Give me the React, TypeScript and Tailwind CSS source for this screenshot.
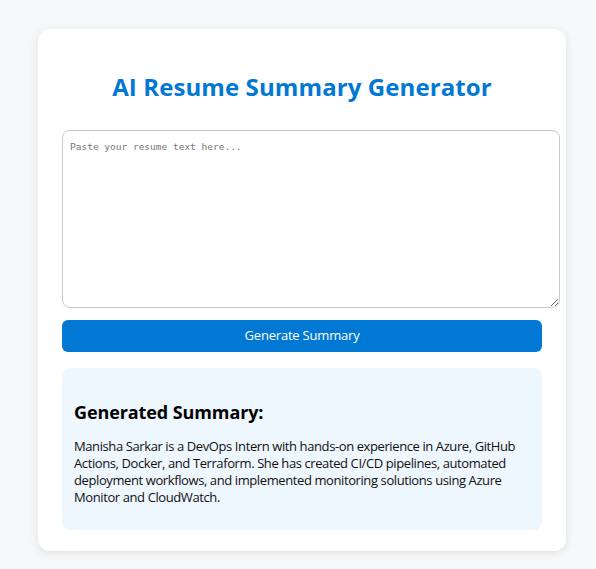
export default function App() {
  return (
    <div className="min-h-[569px] bg-[#f6f8fa] pl-[38px] pt-[29px] pb-[18px] font-['Open_Sans',sans-serif]">
      <div className="w-[528px] rounded-xl bg-white px-6 pb-[21px] pt-[42px] shadow-[0_2px_10px_rgba(0,0,0,0.1)]">
        <h1 className="text-center text-[24px] font-bold leading-8 tracking-[0.1px] text-[#0078d4]">
          AI Resume Summary Generator
        </h1>

        <textarea
          placeholder="Paste your resume text here..."
          className="mt-[27px] block h-[178px] w-[498px] rounded-lg border border-[#c8c8c8] bg-white px-[7px] py-[9px] font-['DejaVu_Sans_Mono',monospace] text-[9.5px] outline-none placeholder:text-[#777]"
        />

        <button className="mt-3 block h-[32px] w-full rounded-md bg-[#0078d4] text-[13px] tracking-[-0.2px] text-white">
          Generate Summary
        </button>

        {/* Summary result */}
        <div className="mt-4 rounded-lg bg-[#eef6fe] px-3 pb-[24px] pt-[32px]">
          <h3 className="text-[18px] font-bold leading-6 tracking-[-0.1px] text-black">Generated Summary:</h3>
          <p className="mt-[14px] text-[13px] leading-[17px] tracking-[-0.4px] text-[#111]">
            Manisha Sarkar is a DevOps Intern with hands-on experience in Azure, GitHub Actions,
            Docker, and Terraform. She has created CI/CD pipelines, automated deployment workflows,
            and implemented monitoring solutions using Azure Monitor and CloudWatch.
          </p>
        </div>
      </div>
    </div>
  );
}
